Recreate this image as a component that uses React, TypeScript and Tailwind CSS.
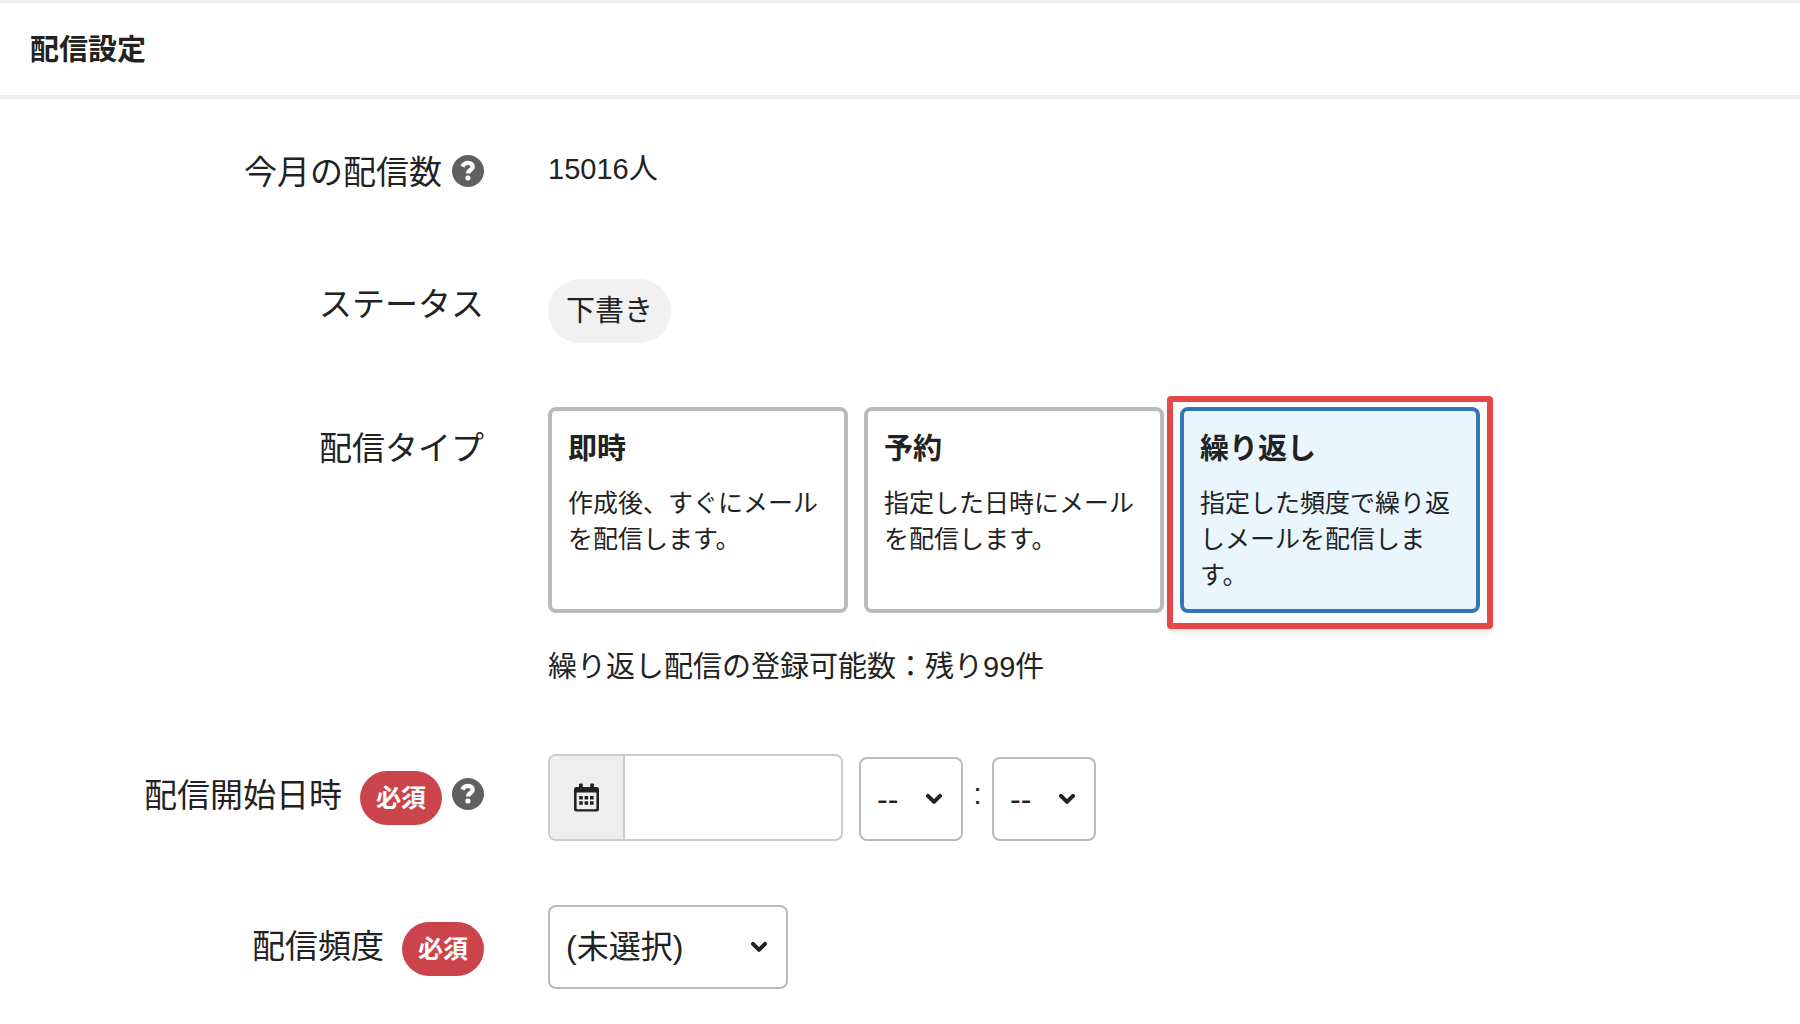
import { useState, type ReactNode } from 'react';
import { clsx } from 'clsx';

const deliveryTypes = [
  { value: 'now', title: '即時', description: '作成後、すぐにメールを配信します。' },
  { value: 'reserve', title: '予約', description: '指定した日時にメールを配信します。' },
  { value: 'repeat', title: '繰り返し', description: '指定した頻度で繰り返しメールを配信します。' },
];

const hours = Array.from({ length: 24 }, (_, i) => String(i).padStart(2, '0'));
const minutes = ['00', '15', '30', '45'];

function HelpButton({ label }: { label: string }) {
  return (
    <button type="button" aria-label={label} className="mt-2 shrink-0 self-start">
      <svg viewBox="0 0 32 32" className="block size-8" fill="none">
        <circle cx="16" cy="16" r="16" fill="#606060" />
        <path
          d="M10.4 11.4C11.6 9 13.6 7.9 16 7.9C18.8 7.9 20.7 9.4 20.7 11.9C20.7 15 16.1 14.8 16.1 18.6"
          stroke="#fff"
          strokeWidth="4.4"
        />
        <rect x="13.4" y="20.4" width="5" height="5" rx="2" fill="#fff" />
      </svg>
    </button>
  );
}

function RequiredBadge() {
  return (
    <span className="rounded-full bg-[#cc444b] px-4 text-[25px] leading-[54px] font-bold text-white">
      必須
    </span>
  );
}

function CalendarIcon() {
  return (
    <svg viewBox="0 0 26 30" className="h-[30px] w-[26px]" fill="#222">
      <rect x="5" y="0.5" width="3.8" height="6" rx="1" />
      <rect x="16.2" y="0.5" width="3.8" height="6" rx="1" />
      <path
        fillRule="evenodd"
        d="M3 4H22.5A2.5 2.5 0 0 1 25 6.5V26A2.5 2.5 0 0 1 22.5 28.5H2.5A2.5 2.5 0 0 1 0 26V6.5A2.5 2.5 0 0 1 2.5 4ZM2.6 9.5V25.2A1 1 0 0 0 3.6 26.2H21.4A1 1 0 0 0 22.4 25.2V9.5Z"
      />
      {[5.2, 10.6, 16].map((x) => (
        <g key={x}>
          <rect x={x} y="13" width="3.6" height="3.6" rx="0.5" />
          <rect x={x} y="18.2" width="3.6" height="3.6" rx="0.5" />
        </g>
      ))}
    </svg>
  );
}

interface SelectBoxProps {
  id?: string;
  label?: string;
  className: string;
  placeholder: string;
  options: string[];
}

function SelectBox({ id, label, className, placeholder, options }: SelectBoxProps) {
  return (
    <div className={clsx('relative', className)}>
      <select
        id={id}
        aria-label={label}
        className="h-[84px] w-full appearance-none rounded-lg border-2 border-[#bbb] bg-white pl-4 text-[32px] text-[#222]"
      >
        <option value="">{placeholder}</option>
        {options.map((option) => (
          <option key={option}>{option}</option>
        ))}
      </select>
      <svg
        viewBox="0 0 16 12"
        className="pointer-events-none absolute top-9 right-[21px] h-3 w-4"
        fill="none"
        stroke="#222"
        strokeWidth="4"
        strokeLinecap="round"
        strokeLinejoin="round"
      >
        <path d="M2 2.8L8 8.8L14 2.8" />
      </svg>
    </div>
  );
}

interface RowProps {
  label: string;
  htmlFor?: string;
  required?: boolean;
  help?: boolean;
  padded?: boolean;
  children: ReactNode;
}

function Row({ label, htmlFor, required, help, padded, children }: RowProps) {
  return (
    <div className="grid grid-cols-[484px_minmax(0,1fr)] gap-x-16">
      <div className={clsx('flex items-baseline justify-end gap-2.5 self-start', padded && 'pt-4')}>
        <label htmlFor={htmlFor} className={clsx('text-[33px] leading-[52px]', required && 'mr-2')}>
          {label}
        </label>
        {required && <RequiredBadge />}
        {help && <HelpButton label={`${label}について`} />}
      </div>
      <div>{children}</div>
    </div>
  );
}

export default function App() {
  const [type, setType] = useState('repeat');

  return (
    <div className="min-h-screen bg-white font-['Liberation_Sans','Noto_Sans_CJK_JP',sans-serif] text-[#222]">
      <header className="border-t-[3px] border-b-4 border-[#ededed] px-[30px] pt-[25px] pb-[23px]">
        <h1 className="text-[29px] leading-[44px] font-bold">配信設定</h1>
      </header>

      <form className="space-y-16 pt-12 pb-8">
        <Row label="今月の配信数" help>
          <p className="pb-6 text-[29px] leading-[44px]">15016人</p>
        </Row>

        <Row label="ステータス">
          <span className="inline-block rounded-full bg-[#f1f1f1] px-[18px] align-top text-[29px] leading-[64px]">
            下書き
          </span>
        </Row>

        <Row label="配信タイプ" padded>
          <div role="radiogroup" aria-label="配信タイプ" className="flex flex-wrap gap-4">
            {deliveryTypes.map((item) => (
              <div key={item.value} className="relative flex w-[300px]">
                <label
                  className={clsx(
                    'w-full cursor-pointer rounded-lg border-4 p-4',
                    type === item.value ? 'border-[#3276b8] bg-[#e9f6fd]' : 'border-[#bbb] bg-white'
                  )}
                >
                  <input
                    type="radio"
                    name="type"
                    className="sr-only"
                    checked={type === item.value}
                    onChange={() => setType(item.value)}
                  />
                  <span className="block text-[29px] leading-[44px] font-bold">{item.title}</span>
                  <span className="mt-3.5 block text-[25px] leading-9">{item.description}</span>
                </label>
                {item.value === 'repeat' && (
                  <div className="pointer-events-none absolute -inset-x-[13px] -top-[11px] -bottom-4 rounded-sm border-[6px] border-[#e5484b] shadow-md" />
                )}
              </div>
            ))}
          </div>
          <p className="mt-8 text-[29px] leading-[45px]">繰り返し配信の登録可能数：残り99件</p>
        </Row>

        <Row label="配信開始日時" htmlFor="start-date" required help padded>
          <div className="flex items-end">
            <div className="mr-4 flex h-[87px] w-[295px] overflow-hidden rounded-lg border-2 border-[#ccc]">
              <span className="flex w-[75px] shrink-0 items-center justify-center border-r-2 border-[#ccc] bg-[#eee]">
                <CalendarIcon />
              </span>
              <input id="start-date" type="text" className="min-w-0 flex-1 px-4 text-[29px] outline-none" />
            </div>
            <SelectBox className="w-[104px]" label="時" placeholder="--" options={hours} />
            <span className="w-[29px] self-center pb-2 text-center text-[29px] leading-[44px]">:</span>
            <SelectBox className="w-[104px]" label="分" placeholder="--" options={minutes} />
          </div>
        </Row>

        <Row label="配信頻度" htmlFor="frequency" required padded>
          <SelectBox
            id="frequency"
            className="w-60"
            placeholder="(未選択)"
            options={['毎日', '毎週', '毎月']}
          />
        </Row>
      </form>
    </div>
  );
}
